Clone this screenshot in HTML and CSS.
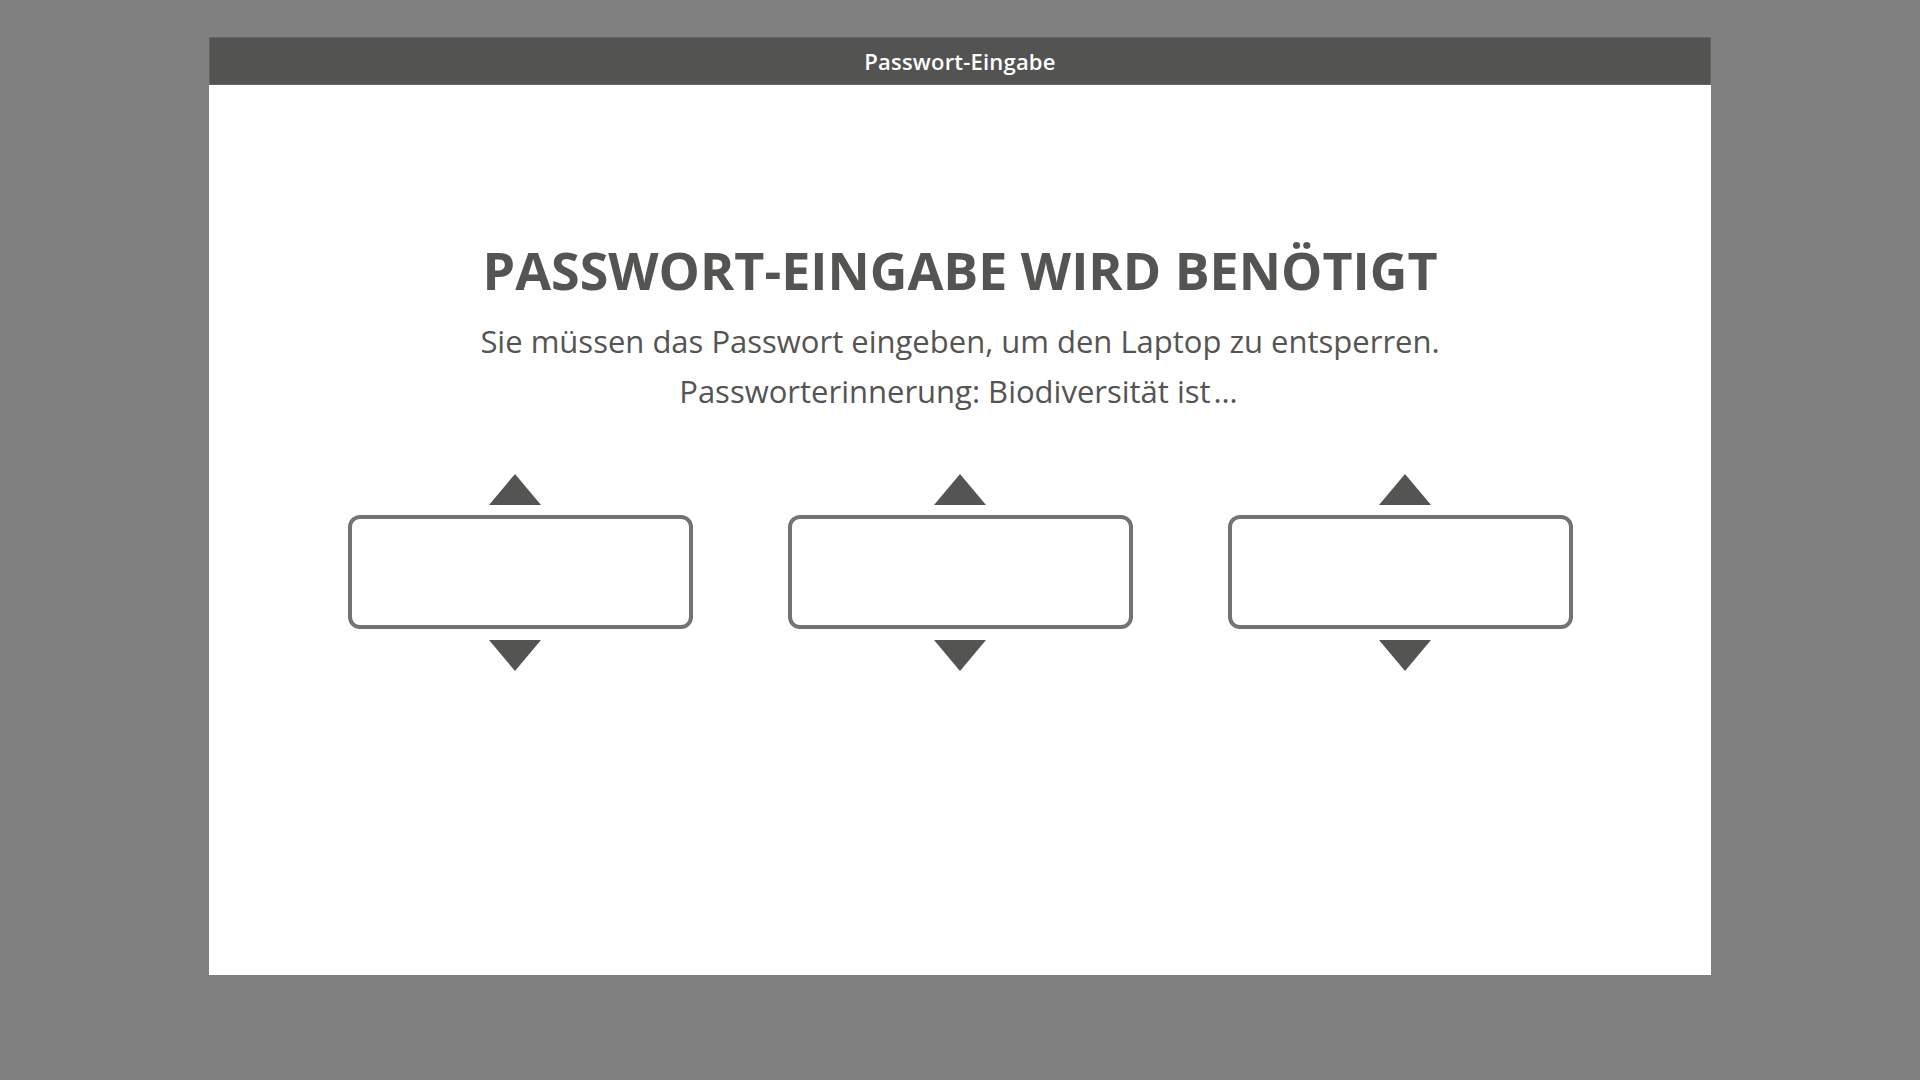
FILE: index.html
```html
<!DOCTYPE html>
<html lang="de">
  <head>
    <meta charset="UTF-8">
    <meta name="viewport" content="width=device-width, initial-scale=1.0">
    <title>Passwort-Eingabe</title>
    <link rel="stylesheet" href="styles.css">
  </head>
  <body>
    <div class="window">
      <div class="titlebar">Passwort-Eingabe</div>
      <div class="content">
        <h1 class="heading">PASSWORT-EINGABE WIRD BENÖTIGT</h1>
        <p class="info">
          Sie müssen das Passwort eingeben, um den Laptop zu entsperren.<br>
          Passworterinnerung: Biodiversität ist<span class="dots">…</span>
        </p>
        <div class="pickers">
          <div class="picker picker-left">
            <svg class="arrow" width="52" height="31" viewBox="0 0 52 31"><polygon points="26,0 52,31 0,31"/></svg>
            <div class="field"></div>
            <svg class="arrow" width="52" height="31" viewBox="0 0 52 31"><polygon points="0,0 52,0 26,31"/></svg>
          </div>
          <div class="picker">
            <svg class="arrow" width="52" height="31" viewBox="0 0 52 31"><polygon points="26,0 52,31 0,31"/></svg>
            <div class="field"></div>
            <svg class="arrow" width="52" height="31" viewBox="0 0 52 31"><polygon points="0,0 52,0 26,31"/></svg>
          </div>
          <div class="picker picker-right">
            <svg class="arrow" width="52" height="31" viewBox="0 0 52 31"><polygon points="26,0 52,31 0,31"/></svg>
            <div class="field"></div>
            <svg class="arrow" width="52" height="31" viewBox="0 0 52 31"><polygon points="0,0 52,0 26,31"/></svg>
          </div>
        </div>
      </div>
    </div>
  </body>
</html>
```

FILE: styles.css
```css
body {
  margin: 0;
  padding: 37px 0;
  font-family: "Open Sans", "Noto Sans", sans-serif;
  background-color: #808080;
  color: #545452;
}
.window {
  width: 1502px;
  height: 938px;
  margin: 0 auto;
  background: #fff;
  display: flex;
  flex-direction: column;
}
.titlebar {
  height: 48px;
  box-sizing: border-box;
  border: 1px solid #656564;
  background-color: #535351;
  color: #fff;
  font-size: 22px;
  font-weight: 600;
  letter-spacing: 0.2px;
  display: flex;
  align-items: center;
  justify-content: center;
}
.content {
  display: flex;
  flex-direction: column;
  align-items: center;
  padding-top: 157px;
}
.heading {
  margin: 0;
  font-size: 52px;
  line-height: 55px;
  font-weight: 700;
}
.info {
  margin: 19px 0 0;
  font-size: 31px;
  line-height: 50px;
  text-align: center;
}
.dots {
  margin-left: 3px;
  letter-spacing: 3px;
}
.pickers {
  display: flex;
  gap: 90px;
  margin-top: 58px;
}
.picker {
  width: 355px;
  display: flex;
  flex-direction: column;
  align-items: center;
}
.picker-left .field {
  align-self: flex-end;
}
.picker-right .field {
  align-self: flex-start;
}
.arrow {
  display: block;
  fill: #545452;
}
.field {
  width: 345px;
  height: 114px;
  box-sizing: border-box;
  border: 4px solid #737373;
  border-radius: 12px;
  margin: 10px 0 11px;
}
```
